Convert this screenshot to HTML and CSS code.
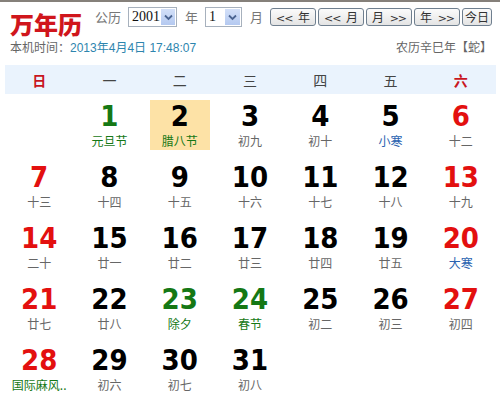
FILE: index.html
```html
<!DOCTYPE html>
<html lang="zh">
<head>
<meta charset="utf-8">
<title>万年历</title>
<link rel="stylesheet" href="styles.css">
</head>
<body>
<div class="top-rule"></div>
<header class="bar">
  <h1 class="logo">万年历</h1>
  <div class="controls">
    <span class="lbl lbl-gl">公历</span>
    <div class="sel sel-year"><span class="val">2001</span><span class="arrow"><svg width="9" height="7" viewBox="0 0 9 7"><path d="M1 1.5 L4.5 5 L8 1.5" fill="none" stroke="#4a6491" stroke-width="1.8"/></svg></span></div>
    <span class="lbl lbl-y">年</span>
    <div class="sel sel-month"><span class="val">1</span><span class="arrow"><svg width="9" height="7" viewBox="0 0 9 7"><path d="M1 1.5 L4.5 5 L8 1.5" fill="none" stroke="#4a6491" stroke-width="1.8"/></svg></span></div>
    <span class="lbl lbl-m">月</span>
    <div class="btns">
      <button class="btn btn-w"><span class="ar">&lt;&lt;</span> 年</button>
      <button class="btn btn-w"><span class="ar">&lt;&lt;</span> 月</button>
      <button class="btn btn-w">月 <span class="ar">&gt;&gt;</span></button>
      <button class="btn btn-w">年 <span class="ar">&gt;&gt;</span></button>
      <button class="btn btn-n">今日</button>
    </div>
  </div>
</header>
<div class="info">
  <span class="clock">本机时间：<span class="now">2013年4月4日 17:48:07</span></span>
  <span class="lunar-year">农历辛巳年【蛇】</span>
</div>
<div class="cal">
  <div class="week">
    <div class="wd red">日</div>
    <div class="wd">一</div>
    <div class="wd">二</div>
    <div class="wd">三</div>
    <div class="wd">四</div>
    <div class="wd">五</div>
    <div class="wd red">六</div>
  </div>
  <div class="days">
    <div class="day empty"></div>
    <div class="day"><div class="box"><div class="num green">1</div><div class="ln green">元旦节</div></div></div>
    <div class="day"><div class="box today"><div class="num">2</div><div class="ln green">腊八节</div></div></div>
    <div class="day"><div class="box"><div class="num">3</div><div class="ln">初九</div></div></div>
    <div class="day"><div class="box"><div class="num">4</div><div class="ln">初十</div></div></div>
    <div class="day"><div class="box"><div class="num">5</div><div class="ln blue">小寒</div></div></div>
    <div class="day"><div class="box"><div class="num red">6</div><div class="ln">十二</div></div></div>

    <div class="day"><div class="box"><div class="num red">7</div><div class="ln">十三</div></div></div>
    <div class="day"><div class="box"><div class="num">8</div><div class="ln">十四</div></div></div>
    <div class="day"><div class="box"><div class="num">9</div><div class="ln">十五</div></div></div>
    <div class="day"><div class="box"><div class="num">10</div><div class="ln">十六</div></div></div>
    <div class="day"><div class="box"><div class="num">11</div><div class="ln">十七</div></div></div>
    <div class="day"><div class="box"><div class="num">12</div><div class="ln">十八</div></div></div>
    <div class="day"><div class="box"><div class="num red">13</div><div class="ln">十九</div></div></div>

    <div class="day"><div class="box"><div class="num red">14</div><div class="ln">二十</div></div></div>
    <div class="day"><div class="box"><div class="num">15</div><div class="ln">廿一</div></div></div>
    <div class="day"><div class="box"><div class="num">16</div><div class="ln">廿二</div></div></div>
    <div class="day"><div class="box"><div class="num">17</div><div class="ln">廿三</div></div></div>
    <div class="day"><div class="box"><div class="num">18</div><div class="ln">廿四</div></div></div>
    <div class="day"><div class="box"><div class="num">19</div><div class="ln">廿五</div></div></div>
    <div class="day"><div class="box"><div class="num red">20</div><div class="ln blue">大寒</div></div></div>

    <div class="day"><div class="box"><div class="num red">21</div><div class="ln">廿七</div></div></div>
    <div class="day"><div class="box"><div class="num">22</div><div class="ln">廿八</div></div></div>
    <div class="day"><div class="box"><div class="num green">23</div><div class="ln green">除夕</div></div></div>
    <div class="day"><div class="box"><div class="num green">24</div><div class="ln green">春节</div></div></div>
    <div class="day"><div class="box"><div class="num">25</div><div class="ln">初二</div></div></div>
    <div class="day"><div class="box"><div class="num">26</div><div class="ln">初三</div></div></div>
    <div class="day"><div class="box"><div class="num red">27</div><div class="ln">初四</div></div></div>

    <div class="day"><div class="box"><div class="num red">28</div><div class="ln green">国际麻风..</div></div></div>
    <div class="day"><div class="box"><div class="num">29</div><div class="ln">初六</div></div></div>
    <div class="day"><div class="box"><div class="num">30</div><div class="ln">初七</div></div></div>
    <div class="day"><div class="box"><div class="num">31</div><div class="ln">初八</div></div></div>
  </div>
</div>
</body>
</html>
```

FILE: styles.css
```css
html, body {
  margin: 0;
  padding: 0;
  background: #ffffff;
}
body {
  width: 500px;
  height: 400px;
  overflow: hidden;
  font-family: "Liberation Sans", "Noto Sans CJK SC", sans-serif;
  font-size: 12px;
  color: #555;
}
.top-rule {
  height: 2px;
  background: #85807a;
}
.bar {
  display: flex;
  align-items: flex-start;
  height: 31px;
  padding: 5px 0 0 10px;
  white-space: nowrap;
}
.logo {
  flex: none;
  width: 72px;
  height: 24px;
  margin: 5px 0 0 0;
  font-family: "Noto Sans CJK SC", sans-serif;
  font-size: 24px;
  line-height: 24px;
  font-weight: 900;
  color: #d0161c;
  white-space: nowrap;
}
.controls {
  flex: none;
  display: flex;
  align-items: center;
  height: 20px;
  margin-left: 13px;
}
.lbl {
  flex: none;
  font-family: "Noto Sans CJK SC", sans-serif;
  font-size: 13px;
  line-height: 16px;
  color: #777;
}
.lbl-gl { width: 26px; margin-right: 7px; }
.lbl-y { margin: 0 7px 0 8px; }
.lbl-m { margin: 0 7px 0 8px; }
.sel {
  flex: none;
  display: flex;
  align-items: stretch;
  height: 18px;
  border: 1px solid #a7b1bd;
  background: #fff;
}
.sel-year { width: 47px; }
.sel-month { width: 35px; }
.val {
  flex: 1;
  font-family: "Liberation Serif", serif;
  font-size: 14px;
  line-height: 18px;
  color: #111;
  padding-left: 3px;
}
.arrow {
  width: 15px;
  margin: 1px;
  display: flex;
  align-items: center;
  justify-content: center;
  background: linear-gradient(#d3e0f8, #b4c9f0);
}
.btns {
  flex: none;
  display: flex;
  gap: 2px;
}
.btn {
  flex: none;
  height: 18px;
  padding: 0;
  border: 1px solid #6f7f8f;
  border-radius: 3px;
  background: linear-gradient(#fbfbfb, #e4e4e4);
  font-family: "Noto Sans CJK SC", sans-serif;
  font-size: 12px;
  line-height: 16px;
  color: #333;
  white-space: nowrap;
  word-spacing: 3px;
}
.ar {
  font-family: "DejaVu Sans", sans-serif;
  font-size: 11px;
  letter-spacing: -1px;
}
.btn-w { width: 46px; }
.btn-n { width: 30px; }
.info {
  display: flex;
  justify-content: space-between;
  padding: 2px 8px 0 10px;
  font-family: "Noto Sans CJK SC", sans-serif;
  font-size: 12px;
  line-height: 14px;
  color: #666;
}
.now {
  font-family: "Liberation Sans", "Noto Sans CJK SC", sans-serif;
  color: #2d85ae;
}
.cal {
  margin: 10px 4px 0 4px;
}
.week {
  display: grid;
  grid-template-columns: repeat(7, 1fr);
  height: 29px;
  align-items: center;
  background: linear-gradient(to right, transparent 1px, #eaf3fd 1px);
}
.wd {
  text-align: center;
  font-family: "Noto Sans CJK SC", sans-serif;
  font-size: 14px;
  font-weight: 400;
  color: #444;
}
.wd.red { color: #c8161e; font-weight: 700; }
.days {
  display: grid;
  grid-template-columns: repeat(7, 1fr);
  grid-auto-rows: 61px;
}
.day {
  display: flex;
  justify-content: center;
  padding-top: 6px;
}
.box {
  width: 60px;
  height: 50px;
  text-align: center;
}
.box.today {
  background: #fde2a6;
}
.num {
  padding-top: 1px;
  font-family: "DejaVu Sans Condensed", "DejaVu Sans", sans-serif;
  font-stretch: condensed;
  font-weight: 700;
  font-size: 29px;
  line-height: 30px;
  color: #000;
}
.ln {
  margin-top: 3px;
  font-family: "Noto Sans CJK SC", sans-serif;
  font-size: 12px;
  line-height: 14px;
  color: #666;
  white-space: nowrap;
}
.red { color: #e3100f; }
.green { color: #157815; }
.blue { color: #2a63b0; }
.num.green { color: #157815; }
.num.red { color: #e3100f; }
```
